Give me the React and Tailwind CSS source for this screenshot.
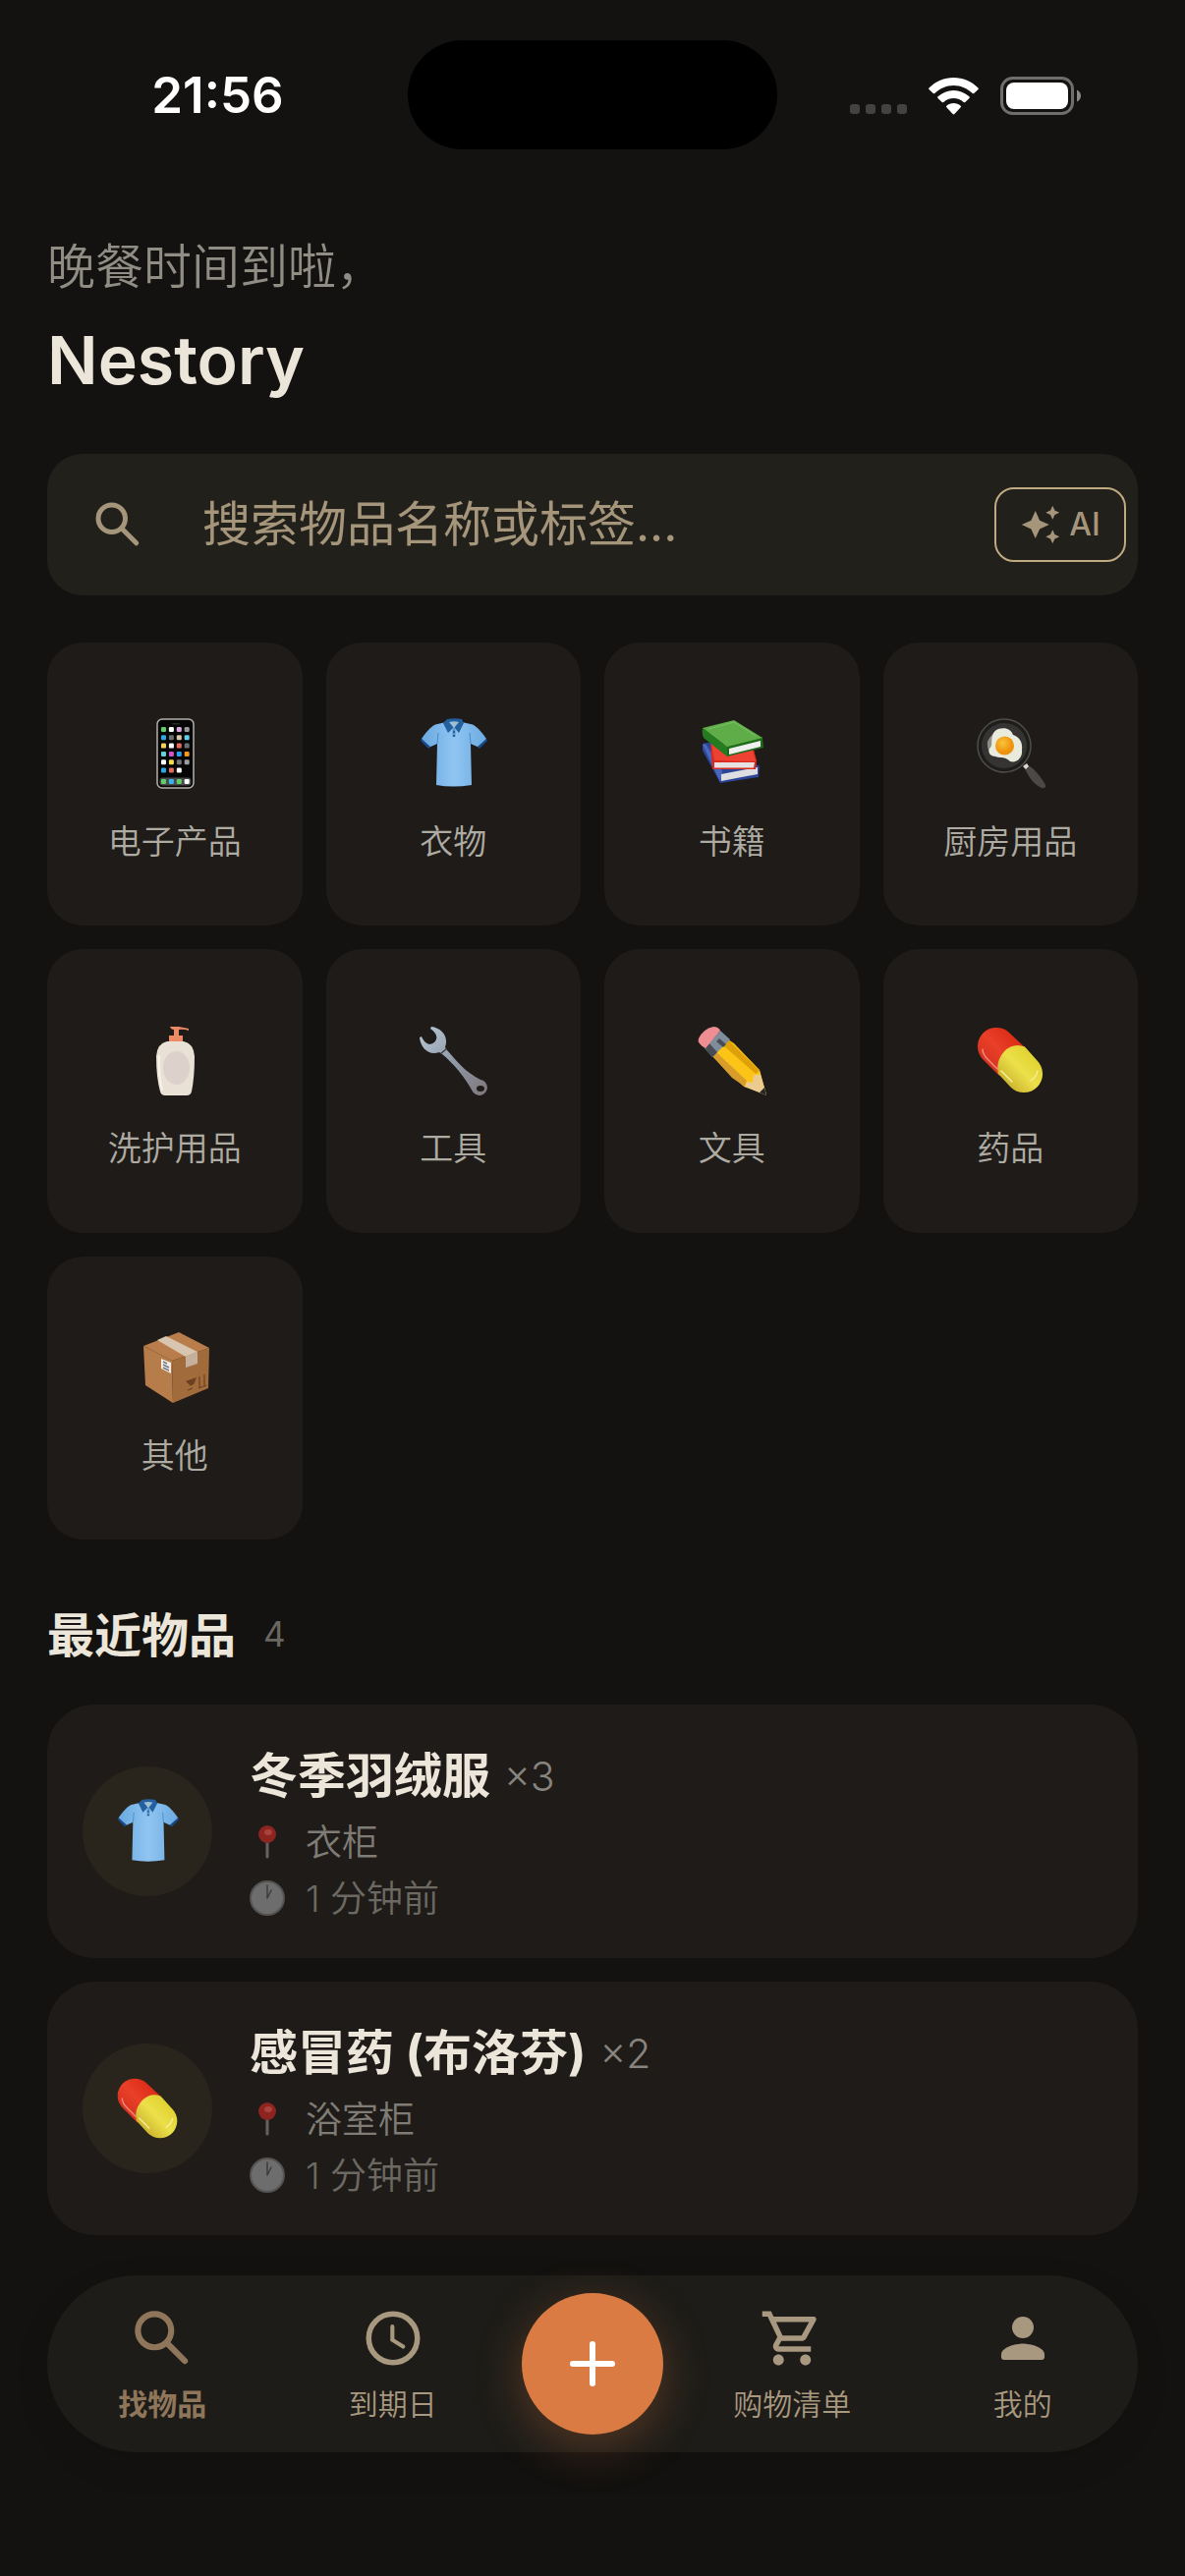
import React from "react";
import { MdAutoAwesome, MdOutlineShoppingCart } from "react-icons/md";

const PhoneIcon = ({ className }) => {
    const rows = [
        ["#5fd068", "#ffffff", "#d9a8e0", "#999999"],
        ["#2aa9e8", "#6f6f6f", "#d8c8a8", "#5ed3ea"],
        ["#f7d154", "#ffffff", "#e36a5c", "#6b6f73"],
        ["#5ed3d8", "#cf55cc", "#2aa0ee", "#f39a1d"],
        ["#ffffff", "#f5dd4b", "#747474", "#9a9da3"],
        ["#2aa9e8", "#e36a5c", "#ffffff"],
    ];
    return (
        <svg viewBox="0 0 72 72" className={className} aria-hidden="true">
            <rect x="18" y="1" width="37" height="70" rx="5" fill="#050505" stroke="#b4b0aa" strokeWidth="1.5" />
            <rect x="33" y="5" width="8" height="1.5" rx="0.7" fill="#2a2a2a" />
            <rect x="20.5" y="60.5" width="32" height="8" rx="3" fill="#4a4a4a" />
            {rows.map((row, y) =>
                row.map((fill, x) => (
                    <rect key={`${x}-${y}`} x={22 + x * 7.9} y={9 + y * 8.3} width="5" height="5" rx="1.2" fill={fill} />
                ))
            )}
            {["#5fd068", "#36b5f0", "#5fd068", "#ffffff"].map((fill, x) => (
                <rect key={x} x={22 + x * 7.9} y="62" width="5" height="5" rx="1.2" fill={fill} />
            ))}
        </svg>
    );
};

const ShirtIcon = ({ className }) => (
    <svg viewBox="0 0 72 72" className={className} aria-hidden="true">
        <defs>
            <linearGradient id="shirt" x1="0" x2="1">
                <stop offset="0" stopColor="#69a8df" />
                <stop offset="0.5" stopColor="#8fc5f2" />
                <stop offset="1" stopColor="#6caae0" />
            </linearGradient>
        </defs>
        <path d="M29 4 18 6.500C13 9 8 15 4 21l7 9 9-4-1 42q17 3 36 0l-1-42 9 4 7-9C66 15 61 9 56 6.500L45 4Z" fill="url(#shirt)" />
        <path d="m4 21-1 2 8 8 2-2ZM70 21l1 2-8 8-2-2Z" fill="#174a8c" />
        <path d="M20 26 21 15M54 26 53 15" stroke="#4b8bc9" strokeWidth="1" fill="none" />
        <path d="M30 5h14l-7 9Z" fill="#b8d9f2" />
        <path d="M30 1q7-1.500 15 0l2 4-5 10-5-6-6 6-5-10Z" fill="#23609f" />
        <path d="M32 4q5-1.500 10 0l-5 6Z" fill="#9dbfd4" />
        <path d="M37 10v9" stroke="#5a93c8" strokeWidth="3" />
        <circle cx="37" cy="14" r="0.9" fill="#174a8c" />
        <circle cx="37" cy="18" r="0.9" fill="#174a8c" />
    </svg>
);

const BooksIcon = ({ className }) => (
    <svg viewBox="0 0 72 72" className={className} aria-hidden="true">
        <path d="m6 26 10-2 48 25-1 11-39 6L6 33Z" fill="#2c4596" />
        <path d="m6 27 3-1 17 28-2 11Z" fill="#4867bd" />
        <path d="m25 57 37-7v7l-37 7Z" fill="#dedee2" />
        <path d="m14 24 44 8 3 11-1 9H16Z" fill="#d92a20" />
        <path d="m15 25 3 18 42 1-3-11Z" fill="#ed4233" />
        <path d="M18 45h41l-1 5.500H18Z" fill="#e7e2e1" />
        <path d="m6 10 25 19v10L7 20q-2-5-1-10Z" fill="#257b20" />
        <path d="m31 28 36-9 1 11-37 9Z" fill="#1f6b1b" />
        <path d="m33 31 32-8v6l-32 8Z" fill="#efefef" />
        <path d="M6 10 38 2l29 18-36 9Z" fill="#5fad49" />
        <path d="M12 11 38 4l22 14" stroke="#7cc263" strokeWidth="1" fill="none" />
    </svg>
);

const PanIcon = ({ className }) => (
    <svg viewBox="0 0 72 72" className={className} aria-hidden="true">
        <defs>
            <radialGradient id="yolk" cx="0.4" cy="0.35">
                <stop offset="0" stopColor="#fbc33a" />
                <stop offset="1" stopColor="#ee930e" />
            </radialGradient>
        </defs>
        <path d="m50 50 3-3 6 4c5 5 10 11 13 17q1 4-4 3C62 68 57 63 54 57Z" fill="#4b4848" />
        <path d="m49 49 4-3 2 3-3 3Z" fill="#d8d8d8" />
        <circle cx="30" cy="28" r="27" fill="#1d1d1c" stroke="#4f4d4c" strokeWidth="1.500" />
        <circle cx="30" cy="28" r="23" fill="#353432" />
        <path d="M13 24q3-7 8-9l-3 22q-6-4-5-13Z" fill="#8f8d88" />
        <path d="M24 11c7-2 13 0 15 6 6 2 10 7 9 15 1 8-5 14-12 12-5-5-10-3-15-5-5 0-8-4-6-8 4-4 1-8 3-13 1-4 3-6 6-7Z" fill="#e9ebdd" />
        <circle cx="30.500" cy="28" r="9.500" fill="url(#yolk)" />
    </svg>
);

const LotionIcon = ({ className }) => (
    <svg viewBox="0 0 72 72" className={className} aria-hidden="true">
        <path d="M31 2h9l10 2v2q-5-2-10-1v6h4v6H30v-6h5V5q-3 0-4-3Z" fill="#ec8a66" />
        <path d="M28 17h17q10 2 11 15 0 22-3 36-1 4-5 4H26q-4 0-5-4-4-14-4-36 1-13 11-15Z" fill="#e9e0d6" />
        <path d="M20 31q-1 18 3 36" stroke="#f7f1e8" strokeWidth="2" fill="none" />
        <ellipse cx="37.500" cy="44" rx="13.500" ry="17" fill="#dcd1cb" />
    </svg>
);

const WrenchIcon = ({ className }) => (
    <svg viewBox="0 0 72 72" className={className} aria-hidden="true">
        <defs>
            <linearGradient id="wrench" x1="0" y1="0" x2="1" y2="1">
                <stop offset="0" stopColor="#b9c8d4" />
                <stop offset="0.5" stopColor="#8f99a8" />
                <stop offset="1" stopColor="#80767b" />
            </linearGradient>
        </defs>
        <path d="M14 2c9 1 16 8 15 17l-1 4 2 3c9 10 18 22 34 30a8 8 0 1 1-8 12C48 53 36 39 25 30l-3-2C12 32 3 24 2 13l2-1c3 7 8 10 13 6 4-4 3-9-4-14Z" fill="url(#wrench)" />
        <path d="m23 29 6-5 1 1-6 5Z" fill="#3c3d42" />
        <ellipse cx="64" cy="65" rx="4" ry="3" fill="#1f1b18" />
    </svg>
);

const PencilIcon = ({ className }) => (
    <svg viewBox="0 0 72 72" className={className} aria-hidden="true">
        <path d="m16 32 16-17 6 4 26 27 7 25-23-8Z" fill="#fbc417" />
        <path d="m16 32 4-4 31 29-2 6-13-9Z" fill="#d89c2b" />
        <path d="m27 21 5-6 32 32-4 3Z" fill="#dea109" />
        <path d="m64 47 7 25-22-9 2-5 6 1 1-8 6 0Z" fill="#eccb91" />
        <path d="m69 64 2 8-7-3Z" fill="#24262a" />
        <path d="M8 24 24 6l10 9-18 18Z" fill="#7f8c9b" />
        <path d="m8 24 5-5 8 9-5 5ZM20 17l3-3 7 6-3 3Z" fill="#484d55" />
        <path d="M9 24Q0 19 2 14 7 4 17 2q5 0 7 4Z" fill="#ee8d92" />
    </svg>
);

const PillIcon = ({ className }) => (
    <svg viewBox="0 0 72 72" className={className} aria-hidden="true">
        <defs>
            <linearGradient id="pillRed" x1="0" y1="1" x2="1" y2="0">
                <stop offset="0" stopColor="#c4281a" />
                <stop offset="0.5" stopColor="#ea3f28" />
                <stop offset="1" stopColor="#d3200c" />
            </linearGradient>
            <linearGradient id="pillYellow" x1="0" y1="1" x2="1" y2="0">
                <stop offset="0" stopColor="#b99a1d" />
                <stop offset="0.5" stopColor="#ece04a" />
                <stop offset="1" stopColor="#d9c81e" />
            </linearGradient>
        </defs>
        <path d="M8.500 35.500a19 19 0 0 1 27-27L51 23 25 52Z" fill="url(#pillRed)" />
        <path d="M36.500 22.500q7-3 14.500 0l12.500 14a19 19 0 0 1-27 27L24 50q-2-8 1-15 4-9 11.500-12.500Z" fill="url(#pillYellow)" />
        <path d="M8 25q0 5 5 10l10 10" stroke="#f08a7c" strokeWidth="1.500" fill="none" strokeLinecap="round" />
        <path d="m27 47 11 11M57 57q6-4 7-10" stroke="#f6ee9a" strokeWidth="1.500" fill="none" strokeLinecap="round" />
    </svg>
);

const BoxIcon = ({ className }) => (
    <svg viewBox="0 0 72 72" className={className} aria-hidden="true">
        <path d="m4 14 29 15 1 43L6 54Z" fill="#b67c4a" />
        <path d="m33 29 38-13-1 41-36 15Z" fill="#a26b3c" />
        <path d="M4 14 40 0l31 16-38 13Z" fill="#b87d4a" />
        <path d="m18 8 9-4 32 16-12 5Z" fill="#d8c5b0" />
        <path d="m47 25 12-5v12l-12 4Z" fill="#c4b09c" />
        <path d="m22 27 10 4v11l-10-5Z" fill="#eeeeec" />
        <path d="m24 30 4 2M24 33l6 3M24 36l6 3" stroke="#7b7875" strokeWidth="1.500" />
        <path d="m48 50 9-3-2 5-3 2ZM49 59l5-2M61 45v11M66 43v11M60 57l8-3" stroke="#6b4122" strokeWidth="1.200" fill="#6b4122" />
    </svg>
);

const PinIcon = ({ className }) => (
    <svg viewBox="0 0 36 36" className={className} aria-hidden="true">
        <path d="M18 18v15" stroke="#67625e" strokeWidth="3" strokeLinecap="round" />
        <circle cx="18" cy="10" r="9" fill="#8e2421" />
        <ellipse cx="19" cy="8" rx="4" ry="3" fill="#a8433f" />
    </svg>
);

const TimeIcon = ({ className }) => (
    <svg viewBox="0 0 36 36" className={className} aria-hidden="true">
        <circle cx="18" cy="18" r="17" fill="#6d6d6d" stroke="#545352" strokeWidth="2" />
        <path d="M18 18V5M18 18l4-8" stroke="#3c3c3c" strokeWidth="1.500" strokeLinecap="round" />
    </svg>
);

const SearchIcon = ({ className }) => (
    <svg viewBox="0 0 24 24" className={className} fill="none" stroke="currentColor" strokeWidth="2" aria-hidden="true">
        <circle cx="9.500" cy="9.500" r="5.500" />
        <path d="m13.800 13.800 5.700 5.700" strokeLinecap="round" />
    </svg>
);

const ClockIcon = ({ className }) => (
    <svg viewBox="0 0 24 24" className={className} fill="none" stroke="currentColor" aria-hidden="true">
        <circle cx="12" cy="12" r="9" strokeWidth="2" />
        <path d="M11.750 7.700v4.900l4 2.500" strokeWidth="1.500" strokeLinecap="round" />
    </svg>
);

const PersonIcon = ({ className }) => (
    <svg viewBox="0 0 24 24" className={className} fill="currentColor" aria-hidden="true">
        <circle cx="12" cy="8" r="4" />
        <path d="M12 14c-2.670 0-8 1.340-8 4v1c0 .55.45 1 1 1h14c.55 0 1-.45 1-1v-1c0-2.660-5.330-4-8-4z" />
    </svg>
);

const categories = [
    { name: "电子产品", Icon: PhoneIcon },
    { name: "衣物", Icon: ShirtIcon },
    { name: "书籍", Icon: BooksIcon },
    { name: "厨房用品", Icon: PanIcon },
    { name: "洗护用品", Icon: LotionIcon },
    { name: "工具", Icon: WrenchIcon },
    { name: "文具", Icon: PencilIcon },
    { name: "药品", Icon: PillIcon },
    { name: "其他", Icon: BoxIcon },
];

const recentItems = [
    { name: "冬季羽绒服", count: 3, place: "衣柜", time: "1 分钟前", Icon: ShirtIcon },
    { name: "感冒药 (布洛芬)", count: 2, place: "浴室柜", time: "1 分钟前", Icon: PillIcon },
];

const StatusBar = () => (
    <div className="grid grid-cols-[1fr_376px_1fr] pt-[41px]">
        <div className="flex items-center justify-center pr-1 pl-8 text-[51px] leading-none font-semibold text-white">
            21:56
        </div>
        <div className="h-[111px] rounded-full bg-black" />
        <div className="flex items-center justify-center gap-[22px] pt-[2px] pr-8">
            <div className="flex gap-[6px] pt-[27px]">
                <span className="size-[10px] rounded-[3px] bg-[#434241]" />
                <span className="size-[10px] rounded-[3px] bg-[#434241]" />
                <span className="size-[10px] rounded-[3px] bg-[#434241]" />
                <span className="size-[10px] rounded-[3px] bg-[#434241]" />
            </div>
            <svg viewBox="0 0 51 38" className="h-[38px] w-[51px]" fill="#fff" aria-hidden="true">
                <path d="M25.500 0C35 0 44 4 50.500 10.500q.8.800 0 1.600L46.300 16q-.8.700-1.600 0C39.500 11 33 8 25.500 8S11.500 11 6.300 16q-.8.700-1.600 0L.5 12.100q-.8-.8 0-1.600C7 4 16 0 25.500 0Z" />
                <path d="M25.500 13c6 0 11.500 2.300 16 6.300q.8.800 0 1.600L37.300 25q-.8.700-1.600 0c-2.800-2.600-6.300-4-10.200-4s-7.400 1.400-10.200 4q-.8.700-1.600 0l-4.200-4.100q-.8-.8 0-1.600c4.500-4 10-6.300 16-6.300Z" />
                <path d="M25.500 26c2.700 0 5.200 1 7.200 2.700q.8.800 0 1.600l-6.300 6.700q-.9.800-1.800 0l-6.300-6.700q-.8-.8 0-1.600c2-1.700 4.500-2.700 7.200-2.700Z" />
            </svg>
            <svg viewBox="0 0 82 39" className="h-[39px] w-[82px]" aria-hidden="true">
                <rect x="1.500" y="1.500" width="72" height="36" rx="11" fill="none" stroke="#6f6e6d" strokeWidth="3" />
                <rect x="6" y="6" width="63" height="27" rx="8" fill="#fff" />
                <path d="M78 13.500q4 2 4 6t-4 6Z" fill="#8a8988" />
            </svg>
        </div>
    </div>
);

const NavItem = ({ label, active, children }) => (
    <button
        type="button"
        className={
            active
                ? "flex flex-1 flex-col items-center gap-2 text-[30px] leading-10 font-bold text-[#8f765a]"
                : "flex flex-1 flex-col items-center gap-2 text-[30px] leading-10 font-[350] text-[#a8987f]"
        }
    >
        <span className="flex h-[74px] items-center pb-1">{children}</span>
        {label}
    </button>
);

const App = () => {
    return (
        <div className="flex min-h-screen flex-col bg-[#131210] font-['Inter','Noto_Sans_CJK_SC',sans-serif] text-[#ebe6d9]">
            <StatusBar />

            <main className="px-12 pt-[84px]">
                <p className="text-[49px] leading-[72px] font-[350] text-[#908d85]">晚餐时间到啦，</p>
                <h1 className="pt-[10px] text-[68px] leading-[96px] font-semibold">Nestory</h1>

                {/* Search */}
                <div className="mt-12 flex h-36 items-center rounded-[36px] bg-[#21201b] pr-3 pl-[42px]">
                    <SearchIcon className="size-[60px] shrink-0 text-[#a5957b]" />
                    <input
                        type="text"
                        aria-label="搜索物品"
                        placeholder="搜索物品名称或标签..."
                        className="ml-14 min-w-0 flex-1 bg-transparent text-[49px] leading-[72px] outline-none placeholder:text-[#a5957b]"
                    />
                    <button
                        type="button"
                        className="flex h-[76px] w-[134px] items-center justify-center gap-2 rounded-[20px] border-2 border-[#c0aa82] text-[32px] font-medium text-[#a5957b]"
                    >
                        <MdAutoAwesome className="size-[42px]" />
                        AI
                    </button>
                </div>

                {/* Categories */}
                <div className="mt-12 grid grid-cols-4 gap-6">
                    {categories.map(({ name, Icon }) => (
                        <button
                            key={name}
                            type="button"
                            className="flex aspect-[9/10] flex-col items-center justify-center gap-8 rounded-[36px] bg-[#1f1b18] pt-[14px] text-[34px] leading-[44px] font-[350] text-[#aeaba3]"
                        >
                            <Icon className="size-[72px]" />
                            {name}
                        </button>
                    ))}
                </div>

                {/* Recent items */}
                <div className="mt-16 flex items-center gap-7">
                    <h2 className="text-[48px] leading-[68px] font-bold">最近物品</h2>
                    <span className="pb-1 text-[35px] leading-[60px] text-[#6a6760]">4</span>
                </div>
                <ul className="mt-9 flex flex-col gap-6">
                    {recentItems.map(({ name, count, place, time, Icon }) => (
                        <li key={name} className="flex items-center gap-[38px] rounded-[48px] bg-[#1f1b18] px-9 py-8">
                            <div className="flex size-[132px] shrink-0 items-center justify-center rounded-full bg-[#29251c]">
                                <Icon className="size-[66px]" />
                            </div>
                            <div className="pt-2">
                                <h3 className="mb-[6px] flex items-center gap-[14px] text-[49px] leading-[66px] font-bold">
                                    {name}
                                    <span className="text-[41px] font-light text-[#87847d]">×{count}</span>
                                </h3>
                                <p className="flex items-center gap-[21px] text-[37px] leading-[57px] font-[350] text-[#7f7c76]">
                                    <PinIcon className="size-9" />
                                    {place}
                                </p>
                                <p className="flex items-center gap-[21px] text-[37px] leading-[57px] font-[350] text-[#6c6963]">
                                    <TimeIcon className="size-9" />
                                    {time}
                                </p>
                            </div>
                        </li>
                    ))}
                </ul>
            </main>

            <div className="mt-auto px-12 pt-10 pb-[126px]">
                <nav className="flex h-[180px] items-center rounded-full bg-[#1d1c18] shadow-[0_12px_36px_rgba(0,0,0,0.1)]">
                    <NavItem label="找物品" active>
                        <SearchIcon className="size-[74px]" />
                    </NavItem>
                    <NavItem label="到期日">
                        <ClockIcon className="size-[66px]" />
                    </NavItem>
                    <div className="flex w-[172px] justify-center">
                        <button
                            type="button"
                            aria-label="添加物品"
                            className="flex size-36 items-center justify-center rounded-full bg-[#d97b42] shadow-[0_12px_48px_rgba(217,123,66,0.3)]"
                        >
                            <svg viewBox="0 0 46 46" className="size-[46px]" aria-hidden="true">
                                <path d="M23 3v40M3 23h40" stroke="#fff" strokeWidth="6" strokeLinecap="round" />
                            </svg>
                        </button>
                    </div>
                    <NavItem label="购物清单">
                        <MdOutlineShoppingCart className="size-[66px]" />
                    </NavItem>
                    <NavItem label="我的">
                        <PersonIcon className="size-[66px]" />
                    </NavItem>
                </nav>
            </div>
        </div>
    );
};
export default App;
